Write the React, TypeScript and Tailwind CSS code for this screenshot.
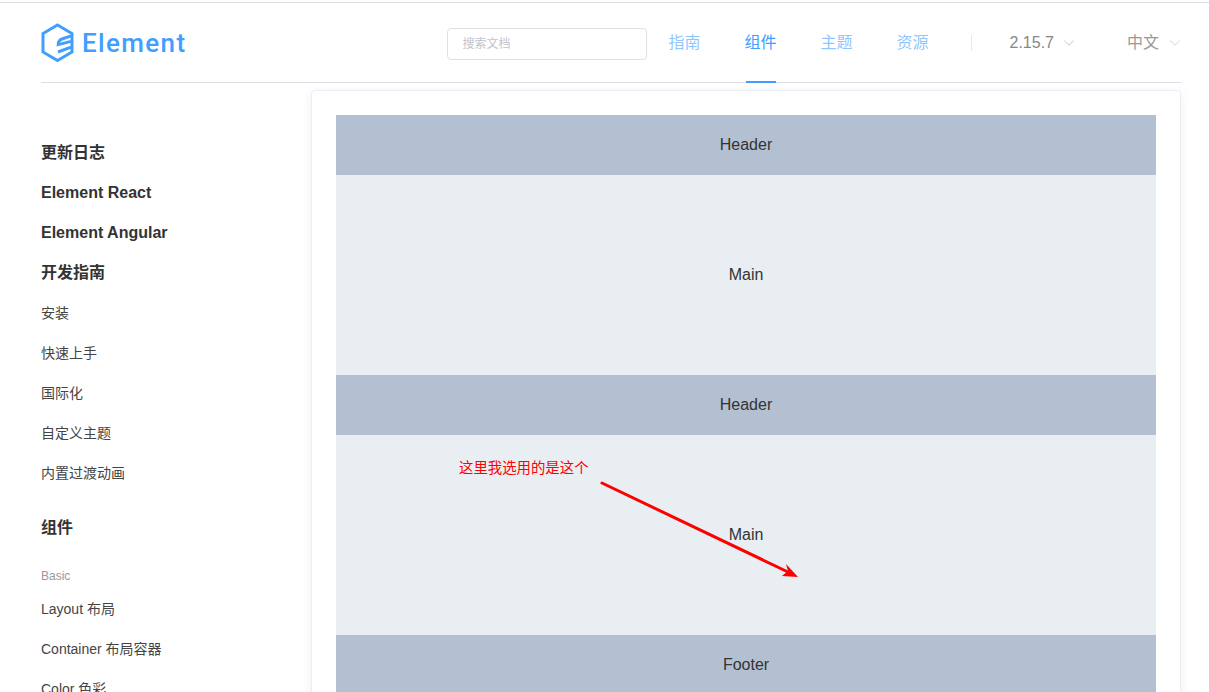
import { ChevronDown } from "lucide-react"

const font = "font-['Liberation_Sans','Noto_Sans_CJK_SC',sans-serif]"

const navLinks = ["指南", "组件", "主题", "资源"]
const topLinks = ["更新日志", "Element React", "Element Angular", "开发指南"]
const guideLinks = ["安装", "快速上手", "国际化", "自定义主题", "内置过渡动画"]
const basicLinks = ["Layout 布局", "Container 布局容器", "Color 色彩"]

function Logo() {
	return (
		<div className="flex items-center">
			<svg width="34" height="40" viewBox="0 0 34 40" fill="none">
				<path d="M16.5 2 L31 10.5 V29 L16.5 37.5 L2 29 V10.5 Z" stroke="#409eff" strokeWidth="3" strokeLinejoin="miter" />
				<path d="M30 12.8 L21 16 Q17.2 17.4 17.2 21.6 L30 18.4" stroke="#409eff" strokeWidth="3" />
				<path d="M30 24.2 L17 29" stroke="#409eff" strokeWidth="3" />
			</svg>
			<span className="ml-[7px] font-['Roboto',sans-serif] text-[26px] leading-none font-medium tracking-[1.35px] text-[#409eff]">Element</span>
		</div>
	)
}

function Header() {
	return (
		<header className="flex h-20 items-center justify-between border-b border-[#dcdfe6]">
			<Logo />
			<div className="flex items-center">
				<div className="mt-0.5 mr-[21px] flex h-8 w-[200px] items-center rounded border border-[#dcdfe6] pl-[14px] text-xs text-[#c0c4cc]">搜索文档</div>
				<nav className="flex gap-11 text-base">
					{navLinks.map((link) =>
						link === "组件" ? (
							<a key={link} className="relative flex h-[79px] items-center text-[#409eff]">
								{link}
								<span className="absolute right-0 -bottom-px left-[2px] h-0.5 bg-[#409eff]"></span>
							</a>
						) : (
							<a key={link} className="flex h-[79px] items-center text-[#409eff]/60">
								{link}
							</a>
						),
					)}
				</nav>
				<div className="mr-[38px] ml-[42px] h-4 w-px bg-[#e6e9ef]"></div>
				<div className="flex items-center text-base text-[#888]">
					2.15.7
					<ChevronDown className="mr-[49px] ml-[6px] text-[#b0b4bb]" size={18} strokeWidth={1} />
				</div>
				<div className="-mr-[3px] flex items-center text-base text-[#999]">
					中文
					<ChevronDown className="ml-[7px] text-[#c0c4cc]" size={18} strokeWidth={1} />
				</div>
			</div>
		</header>
	)
}

function Sidebar() {
	return (
		<aside className="w-[270px] shrink-0 pt-[50px] text-[#333]">
			{topLinks.map((link) => (
				<div key={link} className="text-base leading-10 font-bold">{link}</div>
			))}
			{guideLinks.map((link) => (
				<div key={link} className="text-sm leading-10 text-[#444]">{link}</div>
			))}
			<div className="mt-[15px] text-base leading-10 font-bold">组件</div>
			<div className="mt-[15px] text-xs leading-[26px] text-[#999]">Basic</div>
			<div>
				{basicLinks.map((link) => (
					<div key={link} className="text-sm leading-10 text-[#444]">{link}</div>
				))}
			</div>
		</aside>
	)
}

function Band({ label, tall }: { label: string; tall?: boolean }) {
	return (
		<div className={tall ? "flex h-[200px] items-center justify-center bg-[#e9eef3] text-base text-[#333]" : "flex h-[60px] shrink-0 items-center justify-center bg-[#b3c0d1] text-base text-[#333]"}>
			{label}
		</div>
	)
}

export default function App() {
	return (
		<div className={`${font} h-[692px] w-[1209px] overflow-hidden bg-white pt-0.5`}>
			<div className="border-t border-[#dcdfe6]">
				<div className="ml-[41px] w-[1140px]">
					<Header />
					<div className="flex">
						<Sidebar />
						<main className="relative mt-[7px] h-[640px] w-[870px] rounded border border-[#ebeef5] p-6 shadow-[0_2px_12px_0_rgba(0,0,0,0.06)]">
							<Band label="Header" />
							<Band label="Main" tall />
							<Band label="Header" />
							<Band label="Main" tall />
							<Band label="Footer" />
							{/* annotation drawn over the screenshot */}
							<span className="absolute top-[367px] left-[147px] text-[14.4px] leading-5 text-[#ff0000]">这里我选用的是这个</span>
							<svg className="absolute top-[384px] left-[283px]" width="210" height="110" viewBox="0 0 210 110" fill="none">
								<path d="M7 8 L193 97" stroke="#ff0000" strokeWidth="3" strokeLinecap="round" />
								<path d="M203 102 L191 89 L193 96 L187 101 Z" fill="#ff0000" />
							</svg>
						</main>
					</div>
				</div>
			</div>
		</div>
	)
}
